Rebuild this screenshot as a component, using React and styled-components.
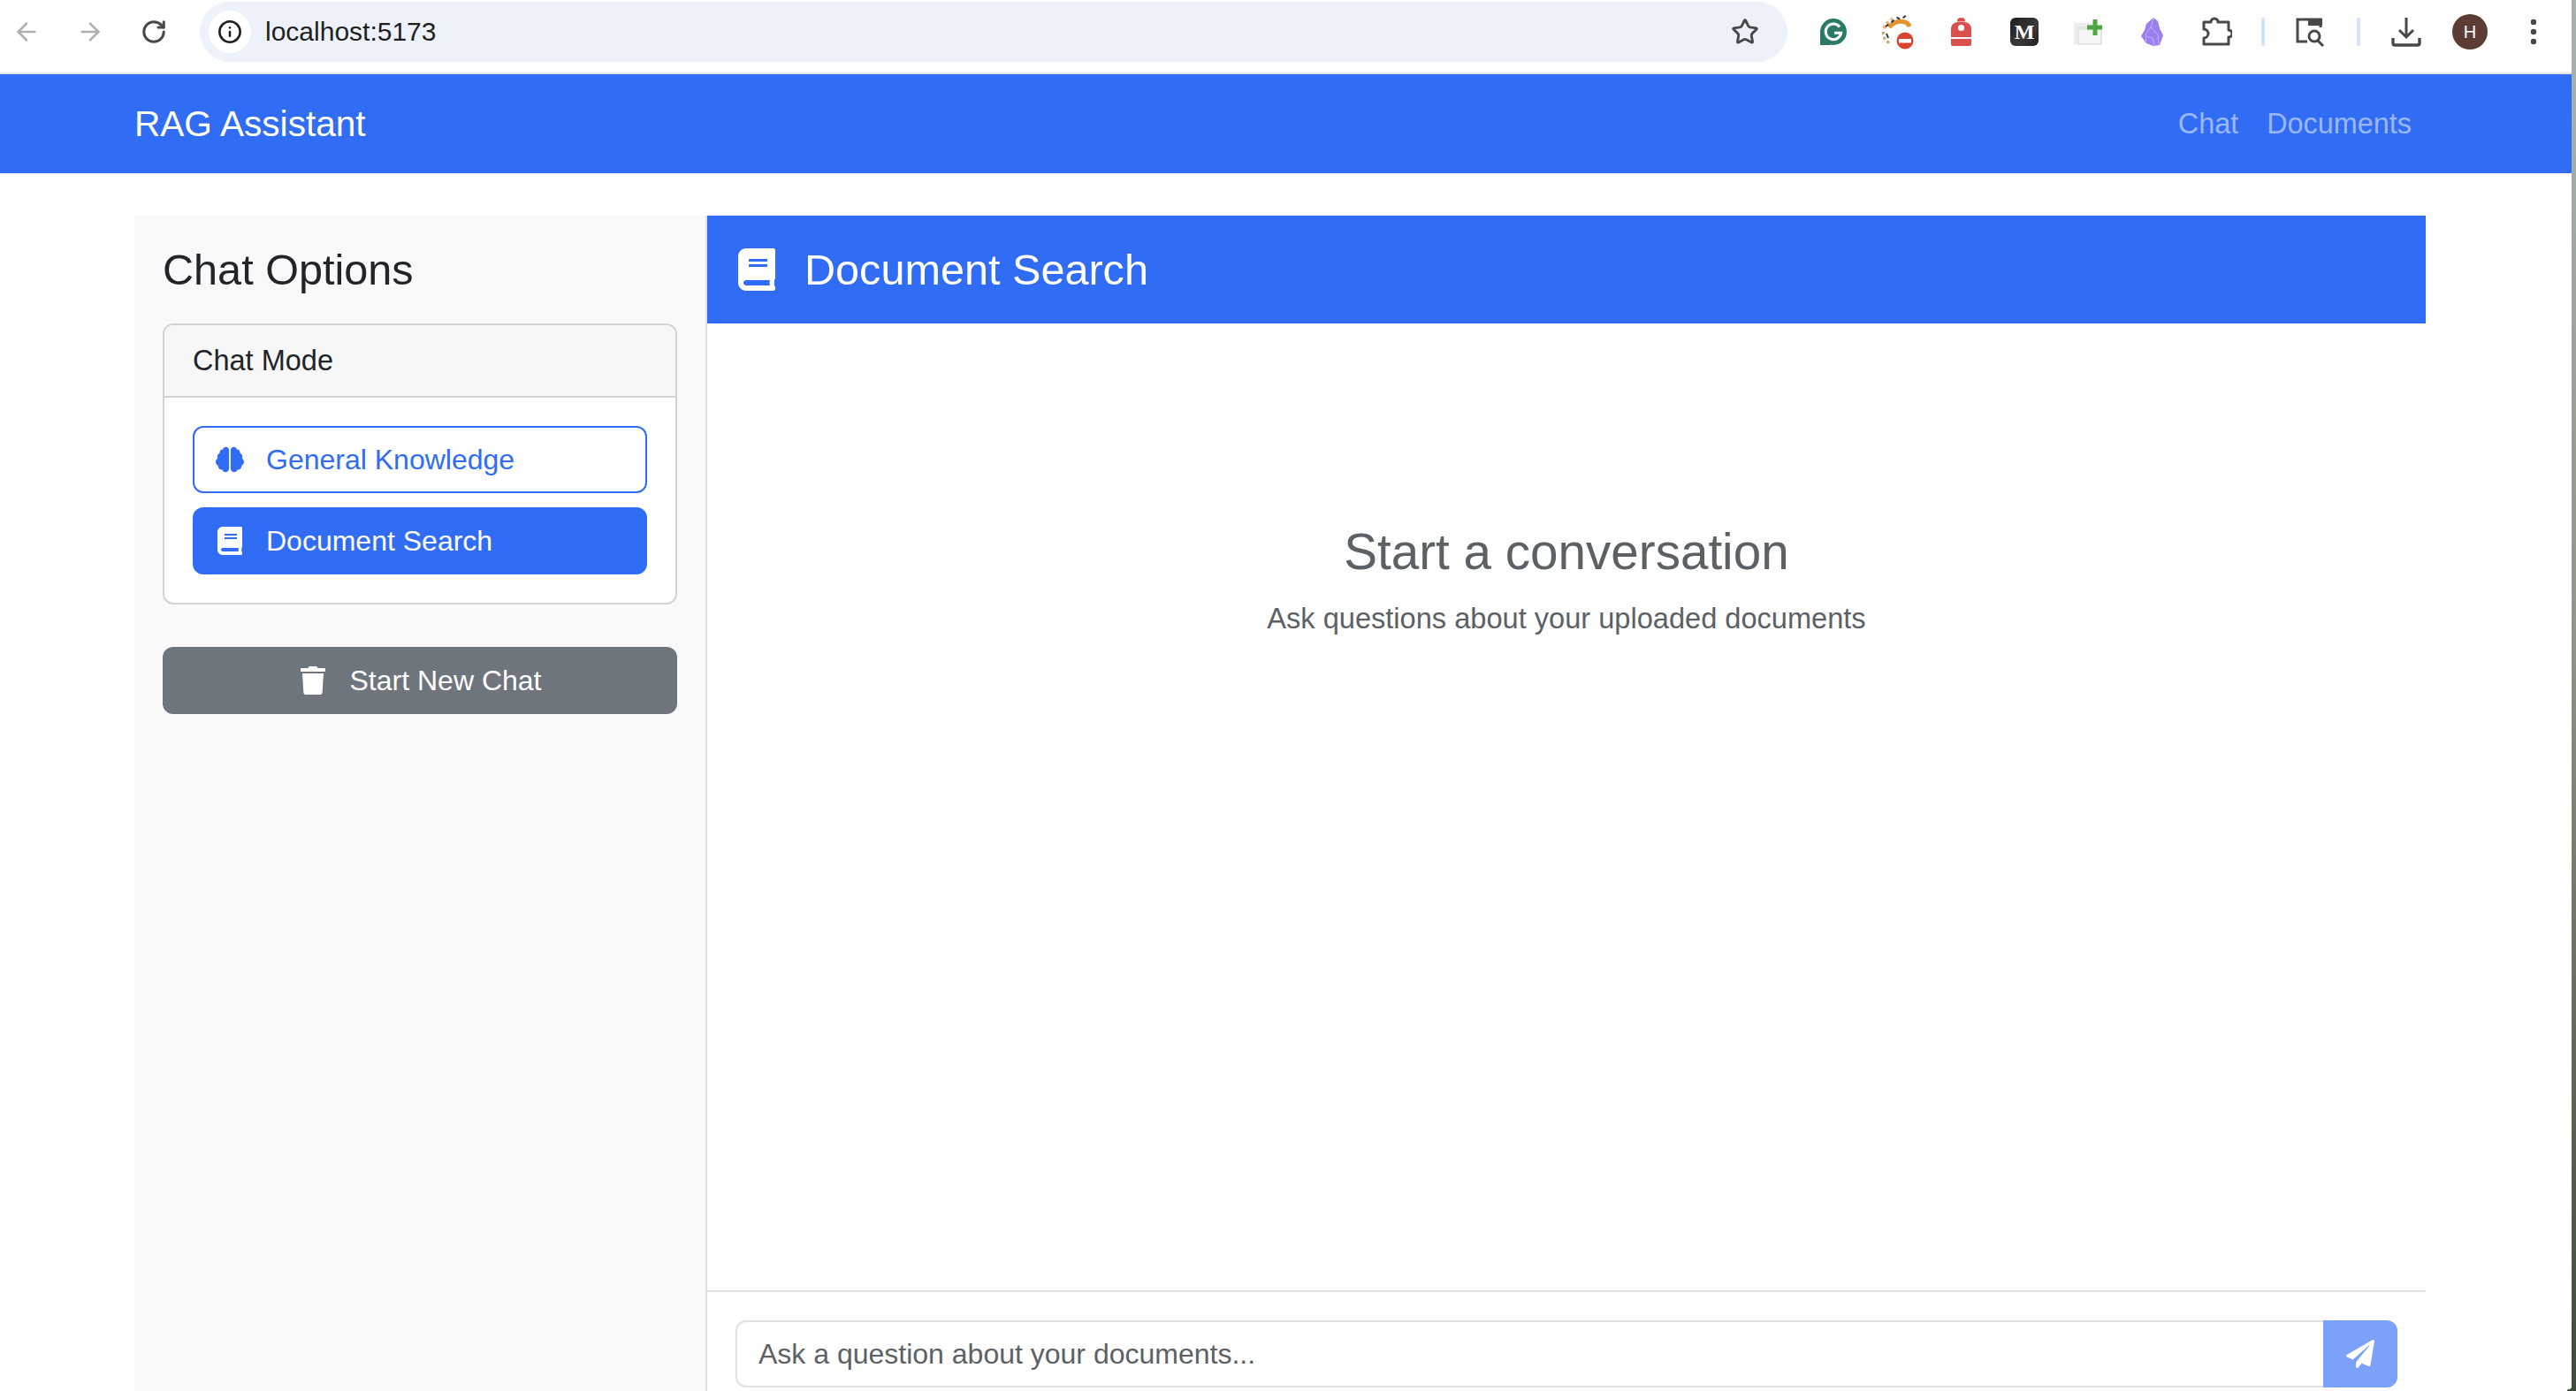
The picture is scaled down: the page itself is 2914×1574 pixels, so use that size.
import React from "react";
import styled, { createGlobalStyle } from "styled-components";
import { FaBrain, FaBook, FaTrash, FaPaperPlane } from "react-icons/fa";
import { ArrowLeft, ArrowRight, RotateCw, Star, Info } from "lucide-react";

const Global = createGlobalStyle`
  html, body { margin: 0; padding: 0; height: 100%; overflow: hidden; background: #fff; }
  body { font-family: "Liberation Sans", Arial, sans-serif; color: #212529; }
  * { box-sizing: border-box; }
`;

const Page = styled.div`
  width: 2914px;
  height: 1574px;
  display: flex;
  flex-direction: column;
  overflow: hidden;
  position: relative;
`;

const WindowEdge = styled.div`
  position: absolute;
  top: 0;
  right: 0;
  bottom: 0;
  width: 5px;
  background: linear-gradient(180deg, #a9b2ae 0%, #8f968a 45%, #5a6252 80%, #3f4a3c 100%);
  &::before {
    content: "";
    position: absolute;
    left: -5px;
    bottom: 0;
    width: 5px;
    height: 8px;
    background: radial-gradient(circle at 0 0, transparent 6px, #3f4a3c 7px);
  }
`;

const Chrome = styled.div`
  height: 84px;
  flex: none;
  display: flex;
  align-items: center;
  padding: 0 0 10px 0;
  background: #fff;
  border-bottom: 2px solid #e2e3e5;
`;

const NavSlot = styled.div`
  width: 72px;
  flex: none;
  display: flex;
  justify-content: center;
  align-items: center;
  color: ${(p) => (p.$dim ? "#aeb0b2" : "#46484a")};
`;

const NavGroup = styled.div`
  display: flex;
  margin-left: -6px;
  width: 232px;
  flex: none;
`;

const Omnibox = styled.div`
  width: 1796px;
  height: 68px;
  flex: none;
  border-radius: 34px;
  background: #edf2fa;
  display: flex;
  align-items: center;
  padding: 0 32px 0 10px;
`;

const SiteChip = styled.div`
  width: 48px;
  height: 48px;
  border-radius: 50%;
  background: #fff;
  display: flex;
  align-items: center;
  justify-content: center;
  color: #1f1f1f;
`;

const Url = styled.div`
  flex: 1;
  margin-left: 16px;
  font-size: 30px;
  color: #1f1f1f;
`;

const Tools = styled.div`
  display: flex;
  align-items: center;
  margin-left: 16px;
  flex: none;
`;

const Tool = styled.div`
  width: ${(p) => p.$w || 72}px;
  height: 60px;
  flex: none;
  display: flex;
  align-items: center;
  justify-content: center;
`;

const Sep = styled.div`
  width: 4px;
  height: 32px;
  border-radius: 2px;
  background: #d3e3fd;
`;

const Avatar = styled.div`
  width: 40px;
  height: 40px;
  border-radius: 50%;
  background: #5b3d35;
  color: #fff;
  font-size: 20px;
  display: flex;
  align-items: center;
  justify-content: center;
`;

const NavBar = styled.header`
  height: 112px;
  flex: none;
  background: #316cf4;
  display: flex;
  align-items: center;
  justify-content: space-between;
  padding: 0 186px 0 152px;
`;

const Brand = styled.div`
  font-size: 40.6px;
  color: #fff;
`;

const NavLinks = styled.nav`
  display: flex;
  gap: 32px;
  font-size: 32.4px;
  color: #9ab7fa;
`;

const Shell = styled.div`
  flex: 1;
  min-height: 0;
  margin: 48px 170px 0 152px;
  display: flex;
`;

const Sidebar = styled.aside`
  width: 648px;
  flex: none;
  background: #f8f9fa;
  border-right: 2px solid #dee2e6;
  padding: 32px 32px 0;
`;

const SideTitle = styled.h4`
  margin: 0 0 32px;
  font-size: 48.6px;
  font-weight: 400;
  line-height: 58px;
  color: #212529;
`;

const Card = styled.section`
  background: #fff;
  border: 2px solid #d2d3d5;
  border-radius: 12px;
  overflow: hidden;
`;

const CardHead = styled.div`
  height: 82px;
  background: #f7f7f7;
  border-bottom: 2px solid #d2d3d5;
  display: flex;
  align-items: center;
  padding: 0 32px;
  font-size: 32.5px;
`;

const CardBody = styled.div`
  padding: 32px;
  display: flex;
  flex-direction: column;
  gap: 16px;
`;

const ModeButton = styled.button`
  height: 76px;
  border-radius: 12px;
  border: 2px solid #316cf4;
  background: ${(p) => (p.$active ? "#316cf4" : "#fff")};
  color: ${(p) => (p.$active ? "#fff" : "#316cf4")};
  font: 32px "Liberation Sans", Arial, sans-serif;
  display: flex;
  align-items: center;
  gap: 25px;
  padding: 0 24px;
`;

const ClearButton = styled.button`
  width: 100%;
  height: 76px;
  margin-top: 48px;
  border: none;
  border-radius: 12px;
  background: #6e757c;
  color: #fff;
  font: 32px "Liberation Sans", Arial, sans-serif;
  display: flex;
  align-items: center;
  justify-content: center;
  gap: 26px;
`;

const Main = styled.main`
  flex: 1;
  min-width: 0;
  display: flex;
  flex-direction: column;
`;

const MainHead = styled.div`
  height: 122px;
  flex: none;
  background: #316cf4;
  color: #fff;
  display: flex;
  align-items: center;
  gap: 30px;
  padding: 0 32px;
  font-size: 48.6px;
`;

const Messages = styled.div`
  flex: 1;
  min-height: 0;
  display: flex;
  flex-direction: column;
  align-items: center;
  padding-top: 225px;
`;

const EmptyTitle = styled.h3`
  margin: 0 0 17px;
  font-size: 56.6px;
  line-height: 68px;
  font-weight: 400;
  color: #5c6166;
`;

const EmptyText = styled.p`
  margin: 0;
  font-size: 32.6px;
  line-height: 48px;
  color: #5c6166;
`;

const Composer = styled.form`
  height: 114px;
  flex: none;
  border-top: 2px solid #dee2e6;
  padding: 32px 32px 0;
  display: flex;
`;

const Input = styled.input`
  flex: 1;
  min-width: 0;
  height: 76px;
  border: 2px solid #dee2e6;
  border-right: none;
  border-radius: 12px 0 0 12px;
  padding: 0 24px;
  font: 32px "Liberation Sans", Arial, sans-serif;
  outline: none;
  &::placeholder { color: #5c6166; opacity: 1; }
`;

const SendButton = styled.button`
  width: 84px;
  height: 76px;
  flex: none;
  border: none;
  background: #7ba2f8;
  color: #fff;
  border-radius: 0 12px 12px 0;
  display: flex;
  align-items: center;
  justify-content: center;
`;

const Grammarly = () => (
  <svg width="30" height="30" viewBox="0 0 30 30">
    <circle cx="15" cy="15" r="15" fill="#2b7a66" />
    <rect x="0" y="15" width="12" height="15" fill="#2b7a66" />
    <path d="M22 9.5a8.8 8.8 0 1 0 1.7 6.8H16" fill="none" stroke="#fff" strokeWidth="3" />
  </svg>
);

const Blocked = () => (
  <svg width="38" height="40" viewBox="0 0 38 40">
    <path d="M10 15c4-5 10-8 18-6 2 .5 4 2 5 5" fill="none" stroke="#e8932a" strokeWidth="5" />
    <path d="M4 16c3-6 7-9 12-11" fill="none" stroke="#e5b070" strokeWidth="4" strokeDasharray="3 3" />
    <path d="M6 14l7-5 6-5 4 2 7-5" fill="none" stroke="#33363a" strokeWidth="2" strokeDasharray="4 4" />
    <path d="M3 20l2 8 5 5" fill="none" stroke="#d8a060" strokeWidth="3" strokeDasharray="3 3" />
    <path d="M7 22l2 5" stroke="#33363a" strokeWidth="2" />
    <circle cx="28" cy="30" r="9.5" fill="#d8452e" />
    <rect x="21" y="28" width="14" height="4.5" fill="#fff" />
  </svg>
);

const Backpack = () => (
  <svg width="23" height="32" viewBox="0 0 23 32">
    <path d="M7 3.5a4.5 3.5 0 0 1 9 0v1H7z" fill="#d9504c" />
    <path d="M0 12a8 7 0 0 1 8-7h7a8 7 0 0 1 8 7v10H0zM0 24h23v6a2 2 0 0 1-2 2H2a2 2 0 0 1-2-2z" fill="#d9504c" />
    <circle cx="11.5" cy="11.5" r="3.6" fill="#fff" />
  </svg>
);

const MediumBadge = styled.div`
  width: 32px;
  height: 32px;
  border-radius: 6px;
  background: linear-gradient(135deg, #1d1d1d, #3a3a3a 60%, #1f1f1f);
  color: #fff;
  font: bold 24px "Liberation Serif", serif;
  display: flex;
  align-items: center;
  justify-content: center;
`;

const AddTab = () => (
  <svg width="32" height="30" viewBox="0 0 32 30">
    <rect x="0" y="5" width="26" height="24" fill="#eceeed" />
    <rect x="4" y="9" width="28" height="21" fill="#e4e6e5" />
    <rect x="6" y="13" width="24" height="15" fill="#f4f5f4" />
    <path d="M21.5 1h5v6.5H32v5h-5.5V19h-5v-6.5H15v-5h6.5z" fill="#4ca73f" />
  </svg>
);

const Obsidian = () => (
  <svg width="25" height="32" viewBox="0 0 25 32">
    <path d="M14 0l5 4 2 8 4 8-4 11-7 1-8-3-6-8 4-7 2-7z" fill="#9a7ff0" />
    <path d="M14 1l-3 10-6 8 1 8M11 11l8 8 1 11M6 21l7 2 2 8" fill="none" stroke="#c4b4f7" strokeWidth="1" />
  </svg>
);

const Puzzle = () => (
  <svg width="34" height="34" viewBox="0 0 34 34">
    <path d="M2 6h8a4 4 0 0 1 8 0h12v9a4 4 0 0 1 0 8v8H2v-7a5 5 0 0 0 0-10z" fill="none" stroke="#46484a" strokeWidth="3" strokeLinejoin="round" />
  </svg>
);

const ReaderSearch = () => (
  <svg width="36" height="34" viewBox="0 0 36 34">
    <path d="M14 28H3V3h26v9" fill="none" stroke="#46484a" strokeWidth="3" />
    <rect x="15" y="2" width="16" height="8" fill="#46484a" />
    <circle cx="22" cy="22" r="6" fill="none" stroke="#46484a" strokeWidth="3" />
    <path d="M26 27l6 6" stroke="#46484a" strokeWidth="3" />
  </svg>
);

const Download = () => (
  <svg width="34" height="34" viewBox="0 0 34 34">
    <path d="M17 1v21M9 15l8 8 8-8" fill="none" stroke="#46484a" strokeWidth="3" />
    <path d="M2 24v6a2 2 0 0 0 2 2h26a2 2 0 0 0 2-2v-6" fill="none" stroke="#46484a" strokeWidth="3.4" />
  </svg>
);

const Dots = () => (
  <svg width="8" height="32" viewBox="0 0 8 32">
    <circle cx="4" cy="5" r="3.2" fill="#46484a" />
    <circle cx="4" cy="16" r="3.2" fill="#46484a" />
    <circle cx="4" cy="27" r="3.2" fill="#46484a" />
  </svg>
);

export default function App() {
  return (
    <Page>
      <Global />
      <Chrome>
        <NavGroup>
          <NavSlot $dim><ArrowLeft size={32} strokeWidth={2} /></NavSlot>
          <NavSlot $dim><ArrowRight size={32} strokeWidth={2} /></NavSlot>
          <NavSlot><RotateCw size={30} strokeWidth={2.4} /></NavSlot>
        </NavGroup>
        <Omnibox>
          <SiteChip><Info size={28} strokeWidth={2.2} /></SiteChip>
          <Url>localhost:5173</Url>
          <Star size={32} strokeWidth={2.2} color="#46484a" />
        </Omnibox>
        <Tools>
          <Tool><Grammarly /></Tool>
          <Tool><Blocked /></Tool>
          <Tool><Backpack /></Tool>
          <Tool><MediumBadge>M</MediumBadge></Tool>
          <Tool><AddTab /></Tool>
          <Tool><Obsidian /></Tool>
          <Tool $w={76}><Puzzle /></Tool>
          <Tool $w={28}><Sep /></Tool>
          <Tool $w={80}><ReaderSearch /></Tool>
          <Tool $w={28}><Sep /></Tool>
          <Tool $w={80}><Download /></Tool>
          <Tool $w={64}><Avatar>H</Avatar></Tool>
          <Tool $w={80}><Dots /></Tool>
        </Tools>
      </Chrome>
      <NavBar>
        <Brand>RAG Assistant</Brand>
        <NavLinks><span>Chat</span><span>Documents</span></NavLinks>
      </NavBar>
      <Shell>
        <Sidebar>
          <SideTitle>Chat Options</SideTitle>
          <Card>
            <CardHead>Chat Mode</CardHead>
            <CardBody>
              <ModeButton type="button"><FaBrain size={32} />General Knowledge</ModeButton>
              <ModeButton type="button" $active><FaBook size={32} />Document Search</ModeButton>
            </CardBody>
          </Card>
          <ClearButton type="button"><FaTrash size={32} />Start New Chat</ClearButton>
        </Sidebar>
        <Main>
          <MainHead><FaBook size={48} />Document Search</MainHead>
          <Messages>
            <EmptyTitle>Start a conversation</EmptyTitle>
            <EmptyText>Ask questions about your uploaded documents</EmptyText>
          </Messages>
          <Composer>
            <Input placeholder="Ask a question about your documents..." readOnly />
            <SendButton type="button"><FaPaperPlane size={32} /></SendButton>
          </Composer>
        </Main>
      </Shell>
      <WindowEdge />
    </Page>
  );
}
